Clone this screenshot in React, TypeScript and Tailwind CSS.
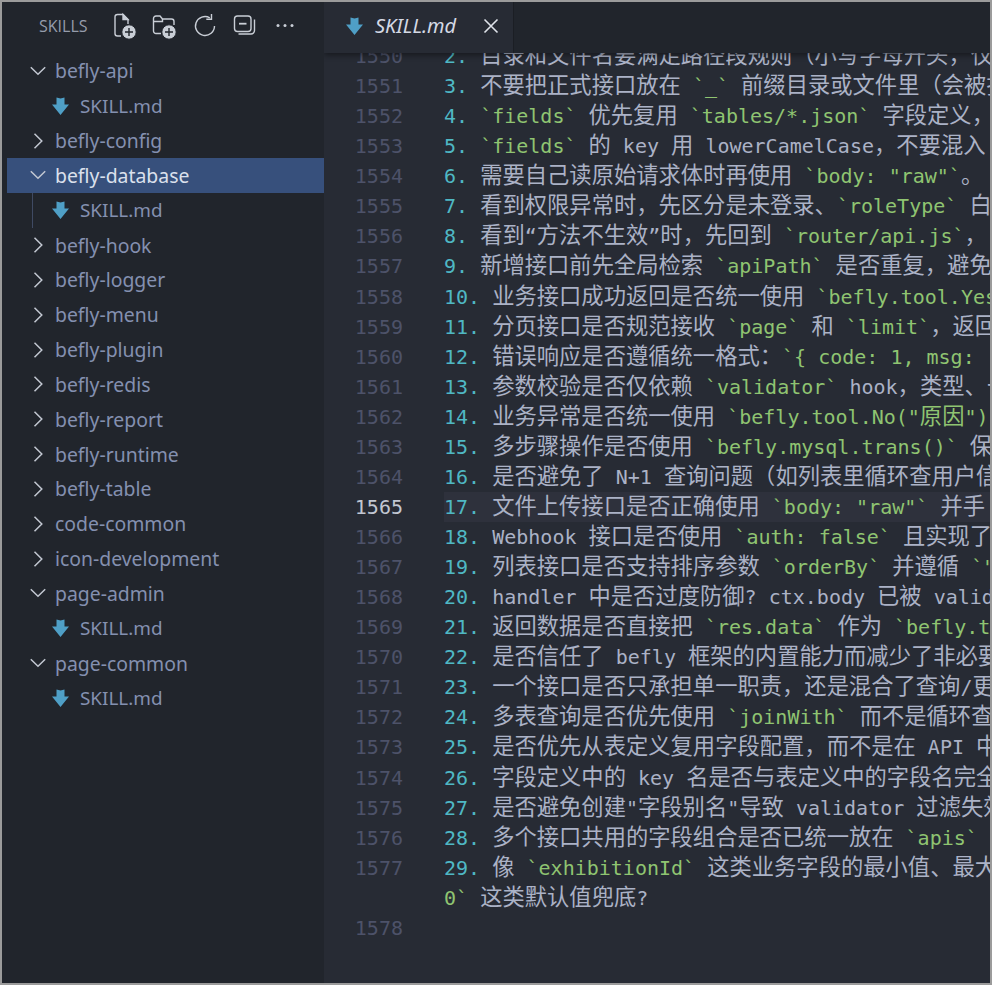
import React from "react";

const mono = "font-['DejaVu_Sans_Mono','Liberation_Mono',monospace]";

function renderSegments(text: string) {
  return text.split(/([\u3000-\u9fff\uff00-\uffef]+)/).map((part, i) =>
    /^[\u3000-\u9fff\uff00-\uffef]+$/.test(part) ? (
      <span key={i} className="font-['Noto_Sans_CJK_SC',sans-serif] text-[22.3px] leading-none">
        {part}
      </span>
    ) : (
      <span key={i}>{part}</span>
    )
  );
}

function Rich({ text }: { text: string }) {
  const parts = text.split(/(`[^`]*`?)/);
  return (
    <>
      {parts.map((p, i) =>
        p.startsWith("`") ? (
          <span key={i} className="text-[#8fc471]">
            {renderSegments(p)}
          </span>
        ) : (
          <span key={i}>{renderSegments(p)}</span>
        )
      )}
    </>
  );
}

const lines: { n: string; num: string; text: string }[] = [
  { n: "1550", num: "2.", text: "目录和文件名要满足路径段规则（小写字母开头，仅" },
  { n: "1551", num: "3.", text: "不要把正式接口放在 `_` 前缀目录或文件里（会被扫" },
  { n: "1552", num: "4.", text: "`fields` 优先复用 `tables/*.json` 字段定义，" },
  { n: "1553", num: "5.", text: "`fields` 的 key 用 lowerCamelCase，不要混入" },
  { n: "1554", num: "6.", text: "需要自己读原始请求体时再使用 `body: \"raw\"`。" },
  { n: "1555", num: "7.", text: "看到权限异常时，先区分是未登录、`roleType` 白" },
  { n: "1556", num: "8.", text: "看到“方法不生效”时，先回到 `router/api.js`，" },
  { n: "1557", num: "9.", text: "新增接口前先全局检索 `apiPath` 是否重复，避免" },
  { n: "1558", num: "10.", text: "业务接口成功返回是否统一使用 `befly.tool.Yes" },
  { n: "1559", num: "11.", text: "分页接口是否规范接收 `page` 和 `limit`，返回" },
  { n: "1560", num: "12.", text: "错误响应是否遵循统一格式：`{ code: 1, msg: " },
  { n: "1561", num: "13.", text: "参数校验是否仅依赖 `validator` hook，类型、长" },
  { n: "1562", num: "14.", text: "业务异常是否统一使用 `befly.tool.No(\"原因\")" },
  { n: "1563", num: "15.", text: "多步骤操作是否使用 `befly.mysql.trans()` 保" },
  { n: "1564", num: "16.", text: "是否避免了 N+1 查询问题（如列表里循环查用户信" },
  { n: "1565", num: "17.", text: "文件上传接口是否正确使用 `body: \"raw\"` 并手" },
  { n: "1566", num: "18.", text: "Webhook 接口是否使用 `auth: false` 且实现了" },
  { n: "1567", num: "19.", text: "列表接口是否支持排序参数 `orderBy` 并遵循 `\"" },
  { n: "1568", num: "20.", text: "handler 中是否过度防御? ctx.body 已被 valid" },
  { n: "1569", num: "21.", text: "返回数据是否直接把 `res.data` 作为 `befly.t" },
  { n: "1570", num: "22.", text: "是否信任了 befly 框架的内置能力而减少了非必要" },
  { n: "1571", num: "23.", text: "一个接口是否只承担单一职责，还是混合了查询/更" },
  { n: "1572", num: "24.", text: "多表查询是否优先使用 `joinWith` 而不是循环查" },
  { n: "1573", num: "25.", text: "是否优先从表定义复用字段配置，而不是在 API 中" },
  { n: "1574", num: "26.", text: "字段定义中的 key 名是否与表定义中的字段名完全" },
  { n: "1575", num: "27.", text: "是否避免创建\"字段别名\"导致 validator 过滤失效" },
  { n: "1576", num: "28.", text: "多个接口共用的字段组合是否已统一放在 `apis`" },
  { n: "1577", num: "29.", text: "像 `exhibitionId` 这类业务字段的最小值、最大" },
];

type Row = { label: string; kind: "open" | "closed" | "file"; selected?: boolean; guide?: boolean };
const rows: Row[] = [
  { label: "befly-api", kind: "open" },
  { label: "SKILL.md", kind: "file" },
  { label: "befly-config", kind: "closed" },
  { label: "befly-database", kind: "open", selected: true },
  { label: "SKILL.md", kind: "file", guide: true },
  { label: "befly-hook", kind: "closed" },
  { label: "befly-logger", kind: "closed" },
  { label: "befly-menu", kind: "closed" },
  { label: "befly-plugin", kind: "closed" },
  { label: "befly-redis", kind: "closed" },
  { label: "befly-report", kind: "closed" },
  { label: "befly-runtime", kind: "closed" },
  { label: "befly-table", kind: "closed" },
  { label: "code-common", kind: "closed" },
  { label: "icon-development", kind: "closed" },
  { label: "page-admin", kind: "open" },
  { label: "SKILL.md", kind: "file" },
  { label: "page-common", kind: "open" },
  { label: "SKILL.md", kind: "file" },
];

function MdIcon() {
  return (
    <svg width="17" height="18" viewBox="0 0 17 18" className="shrink-0">
      <path d="M4.5 0.5 L8.5 1.5 L12.5 0.5 V7.5 H17 L8.5 18 L0 7.5 H4.5 Z" fill="#4f9fc6" />
    </svg>
  );
}

function Chevron({ open }: { open: boolean }) {
  return (
    <svg width="18" height="18" viewBox="0 0 18 18" className="shrink-0" fill="none" stroke="#c3c8d2" strokeWidth="1.5">
      {open ? <path d="M1.8 5.3 L9 12.3 L16.2 5.3" /> : <path d="M5.5 1.8 L12.8 9 L5.5 16.2" />}
    </svg>
  );
}

function HeaderIcon({ children }: { children: React.ReactNode }) {
  return (
    <svg width="28" height="28" viewBox="0 0 28 28" className="shrink-0" fill="none" stroke="#c9ced6" strokeWidth="1.4">
      {children}
    </svg>
  );
}

function Plus({ cx }: { cx: number }) {
  return (
    <>
      <circle cx={cx} cy="20" r="7.2" fill="#c9ced6" stroke="#21252c" strokeWidth="1" />
      <path d={`M${cx - 4} 20 H${cx + 4} M${cx} 16 V24`} stroke="#21252c" strokeWidth="1.4" />
    </>
  );
}

function Sidebar() {
  return (
    <aside className="w-[322px] shrink-0 bg-[#21252c] pl-[5px] flex flex-col font-['Noto_Sans',sans-serif]">
      <div className="h-[51.6px] shrink-0 flex items-center pl-[32px] pb-[4px]">
        <span className="w-[72px] shrink-0 text-[16px] text-[#959cab] font-['Open_Sans',sans-serif]">SKILLS</span>
        <div className="flex gap-[12px]">
          <HeaderIcon>
            <path d="M10 24 H6.5 A2.5 2.5 0 0 1 4 21.5 V5 A2.5 2.5 0 0 1 6.5 2.5 H12 L17 7.5 V12" />
            <path d="M12 2.5 V7.5 H17 Z" fill="#c9ced6" />
            <Plus cx={18} />
          </HeaderIcon>
          <HeaderIcon>
            <path d="M10 21.5 H5 A2.5 2.5 0 0 1 2.5 19 V6.5 A2.5 2.5 0 0 1 5 4 H9 L11.5 7 H20.5 A2.5 2.5 0 0 1 23 9.5 V13" />
            <path d="M3 9.5 H11.5 V7" />
            <Plus cx={18} />
          </HeaderIcon>
          <HeaderIcon>
            <path d="M23.5 14 A9.5 9.5 0 1 1 18.8 5.8" />
            <path d="M20.5 2 V7.2 H15.3" />
          </HeaderIcon>
          <HeaderIcon>
            <rect x="3.5" y="4" width="16.5" height="15.5" rx="3" />
            <path d="M8 11.7 H15.5" strokeWidth="1.8" />
            <path d="M23.5 7.5 V18.5 A3.5 3.5 0 0 1 20 22 H7.5" />
          </HeaderIcon>
          <HeaderIcon>
            <circle cx="7" cy="13.5" r="1.5" fill="#c9ced6" stroke="none" />
            <circle cx="14" cy="13.5" r="1.5" fill="#c9ced6" stroke="none" />
            <circle cx="21" cy="13.5" r="1.5" fill="#c9ced6" stroke="none" />
          </HeaderIcon>
        </div>
      </div>
      <div className="flex flex-col">
        {rows.map((r, i) => (
          <div
            key={i}
            className={
              "relative h-[34.83px] flex items-center " +
              (r.selected ? "bg-[#37507c] text-[#dbe0ec] " : "text-[#8490b0] ") +
              (r.kind === "file" ? "pl-[45px] gap-[11px] text-[18.9px]" : "pl-[22px] gap-[8px] text-[19.4px]")
            }
          >
            {r.guide && <div className="absolute left-[25px] top-0 bottom-0 w-px bg-[#3f4a63]" />}
            {r.kind === "file" ? <MdIcon /> : <Chevron open={r.kind === "open"} />}
            <span>{r.label}</span>
          </div>
        ))}
      </div>
    </aside>
  );
}

function TabBar() {
  return (
    <div className="relative z-10 h-[51px] shrink-0 flex bg-[#21252c] shadow-[0_2px_6px_rgba(0,0,0,0.45)]">
      <div className="w-[190px] flex items-center pl-[22px] pb-[4px] bg-[#272b34] border-r border-[#1b1e24]">
        <MdIcon />
        <span className="ml-[12px] text-[20px] italic text-[#d4d9e4] font-['Noto_Sans',sans-serif]">SKILL.md</span>
        <svg width="16" height="16" viewBox="0 0 16 16" className="ml-[27px]" fill="none" stroke="#dfe3ea" strokeWidth="1.6">
          <path d="M1.5 1.5 L14.5 14.5 M14.5 1.5 L1.5 14.5" />
        </svg>
      </div>
    </div>
  );
}

function EditorRow({ n, active, children }: { n?: string; active?: boolean; children: React.ReactNode }) {
  return (
    <div className="flex h-[30.07px] items-center leading-[30px]">
      <div className={"w-[79px] shrink-0 text-right " + (active ? "text-[#c2c7d2]" : "text-[#4d5269]")}>{n}</div>
      <div className={"ml-[41px] flex-1 h-full whitespace-pre overflow-hidden " + (active ? "bg-[#2e313c]" : "")}>
        {children}
      </div>
    </div>
  );
}

function Editor() {
  return (
    <main className="flex-1 min-w-0 flex flex-col bg-[#272b34] overflow-hidden">
      <TabBar />
      <div className={"-mt-[12px] text-[20px] text-[#abb2c6] " + mono}>
        {lines.map((l) => (
          <EditorRow key={l.n} n={l.n} active={l.n === "1565"}>
            <span className="text-[#4fb8c4]">{l.num}</span> <Rich text={l.text} />
          </EditorRow>
        ))}
        <EditorRow>
          <span className="text-[#8fc471]">0`</span> <Rich text="这类默认值兜底?" />
        </EditorRow>
        <EditorRow n="1578">{""}</EditorRow>
      </div>
    </main>
  );
}

export default function App() {
  return (
    <div className="w-[992px] h-[985px] border-2 border-[#9b9b9b] flex overflow-hidden bg-[#272b34]">
      <Sidebar />
      <Editor />
    </div>
  );
}
